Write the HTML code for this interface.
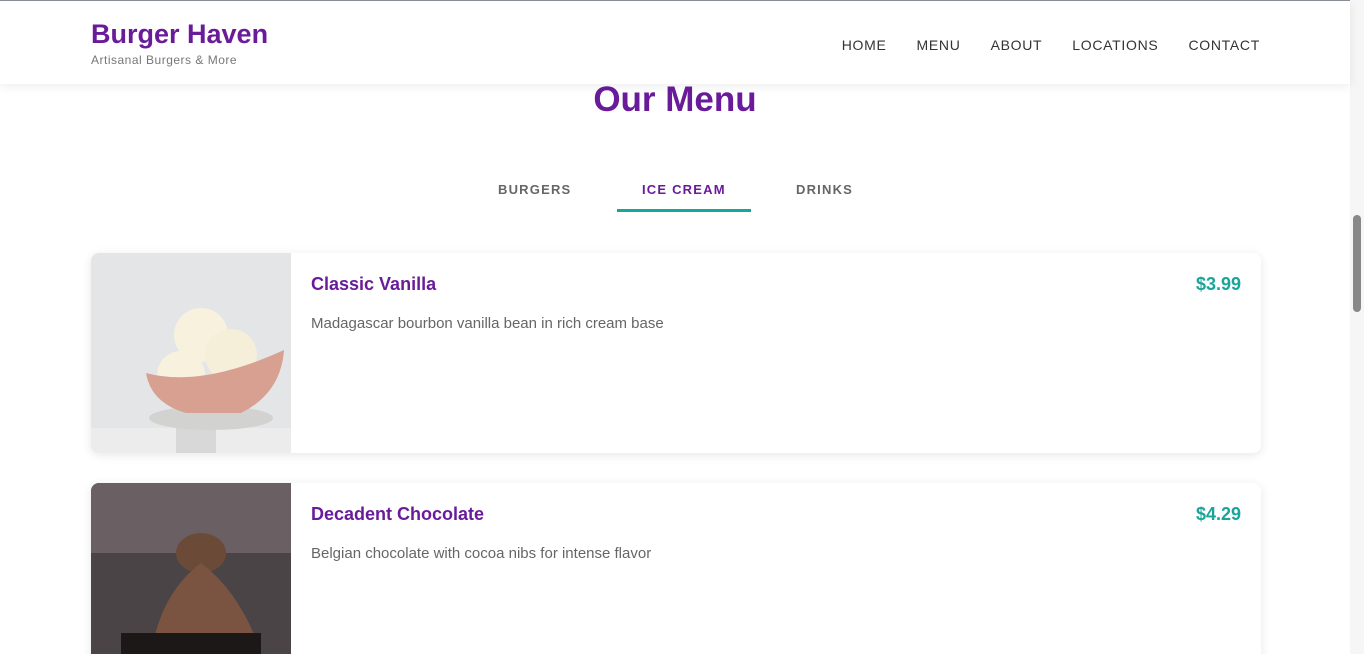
<!DOCTYPE html>
<html><head><style>
*{margin:0;padding:0;box-sizing:border-box}
html,body{width:1364px;height:654px;overflow:hidden}
body{background:#fff;font-family:"Liberation Sans",sans-serif;position:relative}
.top{position:absolute;top:0;left:0;width:1350px;height:1px;background:#8a8f99}
header{position:absolute;top:1px;left:0;width:1350px;height:83px;background:#fff;box-shadow:0 2px 10px rgba(0,0,0,.08);z-index:2}
.logo{position:absolute;left:91px;top:18px;color:#6a1b9a;font-weight:bold;font-size:27px}
.tag{position:absolute;left:91px;top:52px;color:#777;font-size:12px;letter-spacing:.5px}
nav{position:absolute;top:36px;right:90px;display:flex;gap:30px;font-size:14px;letter-spacing:.7px;color:#333}
h1{position:absolute;top:80px;left:0;width:1350px;text-align:center;color:#6a1b9a;font-size:35px}
.tabs{position:absolute;top:182px;left:0;width:1350px;font-size:13px;font-weight:bold;letter-spacing:1.2px;color:#666}
.tabs span{position:absolute}
.ul{position:absolute;left:617px;top:209px;width:134px;height:3px;background:#1aa59a}
.card{position:absolute;left:91px;width:1170px;height:200px;background:#fff;border-radius:8px;box-shadow:0 2px 10px rgba(0,0,0,.1);overflow:hidden}
.card .img{position:absolute;left:0;top:0;width:200px;height:200px}
.card h3{position:absolute;left:220px;top:21px;font-size:18px;color:#6a1b9a}
.card .p{position:absolute;right:20px;top:21px;font-size:18px;font-weight:bold;color:#1aa59a}
.card .d{position:absolute;left:220px;top:62px;font-size:15px;color:#666}
.sb{position:absolute;right:0;top:0;width:14px;height:654px;background:#f6f6f6}
.sb div{position:absolute;left:3px;top:215px;width:8px;height:97px;background:#888;border-radius:4px}
</style></head><body>
<div class="top"></div>
<header><div class="logo">Burger Haven</div><div class="tag">Artisanal Burgers &amp; More</div>
<nav><span>HOME</span><span>MENU</span><span>ABOUT</span><span>LOCATIONS</span><span>CONTACT</span></nav></header>
<h1>Our Menu</h1>
<div class="tabs"><span style="left:498px">BURGERS</span><span style="left:642px;color:#6a1b9a">ICE CREAM</span><span style="left:796px">DRINKS</span></div>
<div class="ul"></div>
<div class="card" style="top:253px">
<svg class="img" viewBox="0 0 200 200"><rect width="200" height="200" fill="#e4e5e7"/><rect y="175" width="200" height="25" fill="#ececec"/><rect x="85" y="170" width="40" height="30" fill="#d8d8d8"/><ellipse cx="120" cy="165" rx="62" ry="12" fill="#d2d2d0"/><circle cx="110" cy="82" r="27" fill="#f7f1de"/><circle cx="140" cy="102" r="26" fill="#f5eed8"/><circle cx="90" cy="122" r="24" fill="#f7f1de"/><path d="M55 120 Q110 135 193 97 Q190 140 150 160 L95 160 Q60 150 55 120Z" fill="#d8a090"/></svg>
<h3>Classic Vanilla</h3><div class="p">$3.99</div><div class="d">Madagascar bourbon vanilla bean in rich cream base</div></div>
<div class="card" style="top:483px">
<svg class="img" viewBox="0 0 200 200"><rect width="200" height="200" fill="#4a4446"/><rect x="0" y="0" width="200" height="70" fill="#6a6064"/><ellipse cx="110" cy="70" rx="25" ry="20" fill="#6b4a38"/><path d="M60 170 Q70 110 110 80 Q150 110 170 170Z" fill="#7a5440"/><rect x="30" y="150" width="140" height="50" fill="#1c1818"/></svg>
<h3>Decadent Chocolate</h3><div class="p">$4.29</div><div class="d">Belgian chocolate with cocoa nibs for intense flavor</div></div>
<div class="sb"><div></div></div>
</body></html>
